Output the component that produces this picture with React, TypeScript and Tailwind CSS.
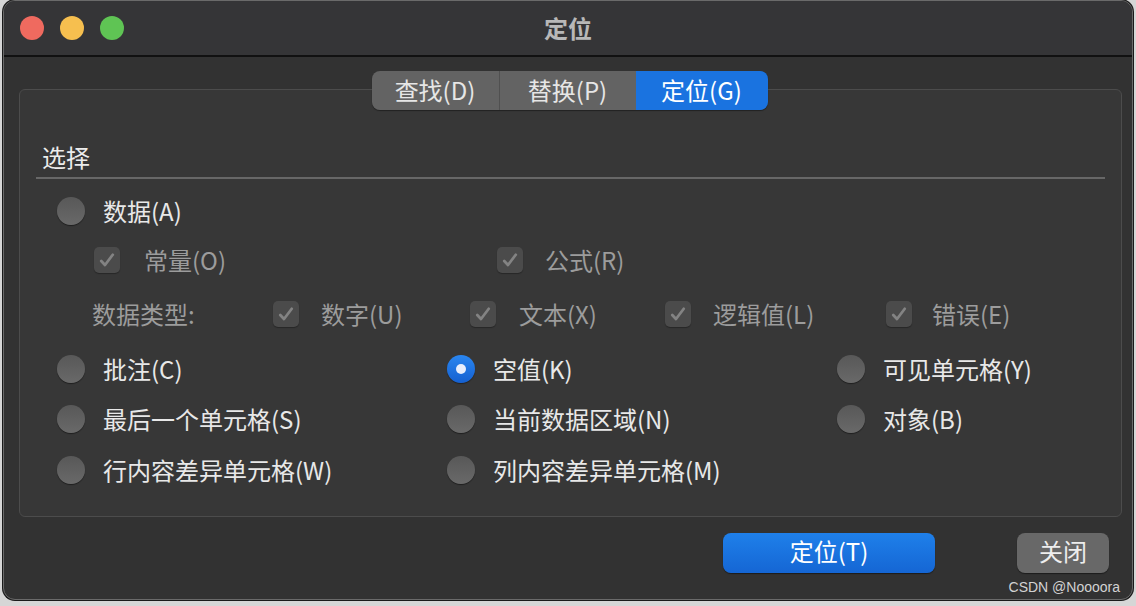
import React from "react";

const FONT = "font-['PingFang_SC','Noto_Sans_CJK_SC','Noto_Sans',sans-serif]";

function Radio({ checked }: { checked?: boolean }) {
    if (checked) {
        return (
            <span className="flex h-[28px] w-[28px] shrink-0 items-center justify-center rounded-full bg-gradient-to-b from-[#2a86f0] to-[#1560d0] shadow-[0_1px_1px_rgba(0,0,0,0.4)]">
                <span className="h-[10px] w-[10px] rounded-full bg-[#e8eefc]" />
            </span>
        );
    }
    return (
        <span className="h-[28px] w-[28px] shrink-0 rounded-full bg-gradient-to-b from-[#585858] to-[#696969] shadow-[0_1px_1px_rgba(0,0,0,0.45)]" />
    );
}

function Check() {
    return (
        <span className="flex h-[26px] w-[26px] shrink-0 items-center justify-center rounded-[5px] bg-[#4b4b4b] shadow-[0_1px_1px_rgba(0,0,0,0.3)]">
            <svg width="20" height="20" viewBox="0 0 16 16" fill="none">
                <path d="M3.4 8.8 L6.4 12 L12.6 3.8" stroke="#838383" strokeWidth="2.2" strokeLinecap="round" strokeLinejoin="round" />
            </svg>
        </span>
    );
}

function RadioItem({ label, checked }: { label: string; checked?: boolean }) {
    return (
        <div className="flex w-[390px] shrink-0 items-center gap-[18px]">
            <Radio checked={checked} />
            <span className="whitespace-nowrap text-[24px] leading-none text-[#e8e8e8]">{label}</span>
        </div>
    );
}

function CheckItem({ label, width, gap }: { label: string; width: string; gap: string }) {
    return (
        <div className={`flex shrink-0 items-center ${width} ${gap}`}>
            <Check />
            <span className="whitespace-nowrap text-[24px] leading-none text-[#9c9c9c]">{label}</span>
        </div>
    );
}

export default function App() {
    return (
        <div className={`flex h-[606px] w-[1136px] items-start bg-[#d6d6d6] pl-[3px] ${FONT}`}>
            <div className="relative flex h-[600px] w-[1130px] flex-col overflow-hidden rounded-[12px] border border-[#6a6a6a] bg-[#323232] shadow-[0_0_0_1px_#1a1a1a]">
                {/* title bar */}
                <div className="relative flex h-[56px] shrink-0 items-center justify-center border-b-2 border-[#111] bg-[#353537]">
                    <div className="absolute left-[16px] top-[15px] flex gap-[16px]">
                        <span className="h-[24px] w-[24px] rounded-full bg-[#ef6a5f]" />
                        <span className="h-[24px] w-[24px] rounded-full bg-[#f6bf4f]" />
                        <span className="h-[24px] w-[24px] rounded-full bg-[#5fc454]" />
                    </div>
                    <span className="text-[24px] font-semibold text-[#b8b8b8]">定位</span>
                </div>

                {/* tabs */}
                <div className="relative z-10 flex justify-center pl-[3px] pt-[14px]">
                    <div className="flex h-[39px] overflow-hidden rounded-[8px] text-[24px] leading-none text-[#e6e6e6] shadow-[0_1px_1px_rgba(0,0,0,0.4)]">
                        <div className="flex w-[128px] items-center justify-center border-r border-[#505050] bg-[#636363] pb-[2px]">查找(D)</div>
                        <div className="flex w-[136px] items-center justify-center bg-[#636363] pb-[2px]">替换(P)</div>
                        <div className="flex w-[132px] items-center justify-center bg-[#1a73e0] pb-[2px] text-white">定位(G)</div>
                    </div>
                </div>

                {/* group box */}
                <div className="-mt-[21px] ml-[15px] mr-[10px] flex h-[428px] flex-col rounded-[6px] border border-[#4c4c4c] bg-[#373737] px-[16px] pt-[51px]">
                    <div className="pl-[6px] text-[24px] leading-[32px] text-[#ececec]">选择</div>
                    <div className="mt-[4px] h-[2px] bg-[#676767]" />

                    <div className="mt-[12px] flex h-[40px] items-center pl-[21px]">
                        <RadioItem label="数据(A)" />
                    </div>

                    <div className="mt-[9px] flex h-[40px] items-center pl-[58px]">
                        <CheckItem label="常量(O)" width="w-[403px]" gap="gap-[24px]" />
                        <CheckItem label="公式(R)" width="w-[300px]" gap="gap-[22px]" />
                    </div>

                    <div className="mt-[14px] flex h-[40px] items-center pl-[56px]">
                        <span className="w-[181px] shrink-0 text-[24px] leading-none text-[#9c9c9c]">数据类型:</span>
                        <CheckItem label="数字(U)" width="w-[197px]" gap="gap-[22px]" />
                        <CheckItem label="文本(X)" width="w-[195px]" gap="gap-[23px]" />
                        <CheckItem label="逻辑值(L)" width="w-[221px]" gap="gap-[22px]" />
                        <CheckItem label="错误(E)" width="w-[150px]" gap="gap-[20px]" />
                    </div>

                    <div className="mt-[15px] flex h-[40px] items-center pl-[21px]">
                        <RadioItem label="批注(C)" />
                        <RadioItem label="空值(K)" checked />
                        <RadioItem label="可见单元格(Y)" />
                    </div>
                    <div className="mt-[10px] flex h-[40px] items-center pl-[21px]">
                        <RadioItem label="最后一个单元格(S)" />
                        <RadioItem label="当前数据区域(N)" />
                        <RadioItem label="对象(B)" />
                    </div>
                    <div className="mt-[11px] flex h-[40px] items-center pl-[21px]">
                        <RadioItem label="行内容差异单元格(W)" />
                        <RadioItem label="列内容差异单元格(M)" />
                    </div>
                </div>

                {/* buttons */}
                <div className="mr-[23px] mt-[16px] flex justify-end gap-[82px]">
                    <button className="flex h-[40px] w-[212px] items-center justify-center rounded-[8px] bg-gradient-to-b from-[#1f80ea] to-[#1566d4] pb-[4px] text-[24px] leading-none text-white shadow-[0_1px_1px_rgba(0,0,0,0.45)]">
                        定位(T)
                    </button>
                    <button className="flex h-[40px] w-[92px] items-center justify-center rounded-[8px] bg-[#686868] pb-[4px] text-[24px] leading-none text-[#eeeeee] shadow-[0_1px_1px_rgba(0,0,0,0.45)]">
                        关闭
                    </button>
                </div>

                <span className="absolute bottom-[1px] right-[12px] font-['Liberation_Sans',sans-serif] text-[14px] text-[#d2d2d2]">
                    CSDN @Noooora
                </span>
            </div>
        </div>
    );
}
